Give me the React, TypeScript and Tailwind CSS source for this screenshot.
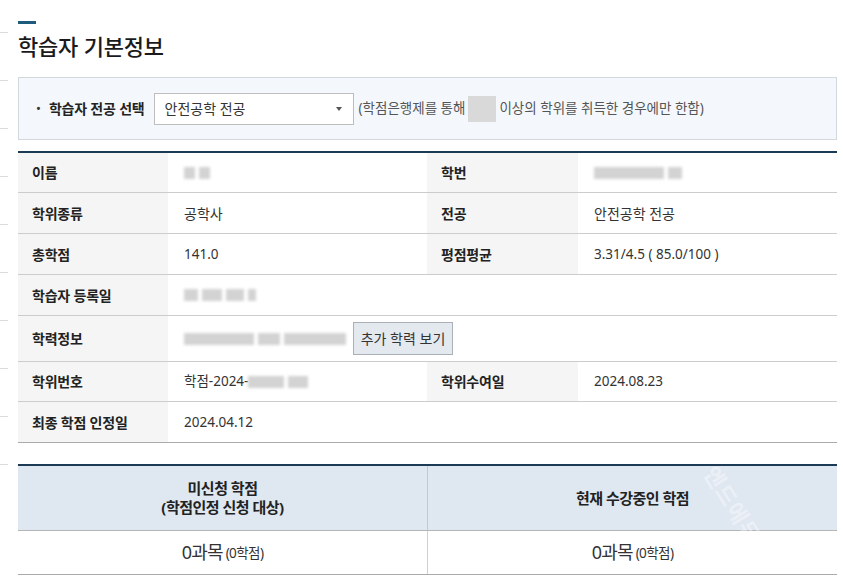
import React from "react";

const FONT = { fontFamily: '"Noto Sans", "Noto Sans CJK KR", sans-serif' };

function Blur({ parts }: { parts: number[] }) {
  return (
    <span className="inline-flex items-center gap-[4px] align-middle">
      {parts.map((s, i) => (
        <span key={i} className="inline-block h-[12px] bg-[#d3d3d3] blur-[1.5px]" style={{ width: s }} />
      ))}
    </span>
  );
}

function Label({ children }: { children: React.ReactNode }) {
  return (
    <div className="flex items-center bg-[#f5f5f5] pl-[14px] text-[14px] font-bold tracking-[-0.2px] text-[#222]">
      {children}
    </div>
  );
}

function Value({ children, span, ko }: { children?: React.ReactNode; span?: boolean; ko?: boolean }) {
  return (
    <div
      className={
        "flex items-center pl-[16px] text-[#333] " +
        (ko ? "text-[14px] " : "text-[13.5px] ") +
        (span ? "col-span-3" : "")
      }
    >
      {children}
    </div>
  );
}

function Watermark({ x, y }: { x: number; y: number }) {
  return (
    <div
      className="pointer-events-none absolute rotate-[58deg] select-none text-[22px] font-bold tracking-[1px] text-white/40"
      style={{ left: x, top: y }}
    >
      엔드에듀
    </div>
  );
}

export default function App() {
  const sideLines = [32, 80, 127, 177, 224, 272, 320, 368, 417, 472];
  return (
    <div className="relative h-[587px] w-[843px] overflow-hidden bg-white" style={FONT}>
      <div className="flex">
        {/* sidebar remnants */}
        <div className="flex w-[8px] flex-col pt-[32px]">
          {sideLines.map((_, i) => (
            <div key={i} className="h-[48px] border-t border-[#dcdcdc]" />
          ))}
        </div>

        <div className="ml-[10px] w-[819px]">
          <div className="pt-[21px]">
            <div className="h-[3px] w-[18px] bg-[#1e5c7e]" />
          </div>
          <h2 className="mt-[7px] h-[30px] text-[22px] font-medium leading-[30px] tracking-[-0.2px] text-[#1a1a1a]">
            학습자 기본정보
          </h2>

          {/* major select */}
          <div className="mt-[16px] flex h-[63px] items-center border border-[#d3d8de] bg-[#f4f8fc] pl-[17px]">
            <span className="mr-[8px] text-[13px] text-[#333]">•</span>
            <span className="text-[14px] font-bold tracking-[-0.2px] text-[#222]">학습자 전공 선택</span>
            <div className="ml-[9px] flex h-[32px] w-[200px] items-center justify-between border border-[#bdbdbd] bg-white pl-[10px] pr-[11px] text-[14px] text-[#333]">
              <span>안전공학 전공</span>
              <span className="h-0 w-0 border-x-[3.5px] border-t-[4px] border-x-transparent border-t-[#555]" />
            </div>
            <span className="ml-[5px] flex items-center text-[13.5px] text-[#555]">
              (학점은행제를 통해
              <span className="ml-[3px] mr-[3px] inline-block h-[26px] w-[28px] bg-[#d9d9d9]" />
              이상의 학위를 취득한 경우에만 한함)
            </span>
          </div>

          {/* info table */}
          <div className="mt-[11px] border-t-2 border-[#1d3a55]">
            <div className="grid h-[40px] grid-cols-[150px_259px_151px_259px] border-b border-[#cccccc]">
              <Label>이름</Label>
              <Value>
                <Blur parts={[11, 11]} />
              </Value>
              <Label>학번</Label>
              <Value>
                <Blur parts={[70, 14]} />
              </Value>
            </div>
            <div className="grid h-[41px] grid-cols-[150px_259px_151px_259px] border-b border-[#cccccc]">
              <Label>학위종류</Label>
              <Value ko>공학사</Value>
              <Label>전공</Label>
              <Value ko>안전공학 전공</Value>
            </div>
            <div className="grid h-[41px] grid-cols-[150px_259px_151px_259px] border-b border-[#cccccc]">
              <Label>총학점</Label>
              <Value>141.0</Value>
              <Label>평점평균</Label>
              <Value>3.31/4.5 ( 85.0/100 )</Value>
            </div>
            <div className="grid h-[41px] grid-cols-[150px_259px_151px_259px] border-b border-[#cccccc]">
              <Label>학습자 등록일</Label>
              <Value span>
                <Blur parts={[14, 20, 18, 8]} />
              </Value>
            </div>
            <div className="grid h-[46px] grid-cols-[150px_259px_151px_259px] border-b border-[#cccccc]">
              <Label>학력정보</Label>
              <Value span>
                <Blur parts={[70, 22, 62]} />
                <button className="ml-[7px] h-[33px] w-[100px] border border-[#a9b0b8] bg-[#e4e9f0] text-[14px] text-[#333]">
                  추가 학력 보기
                </button>
              </Value>
            </div>
            <div className="grid h-[40px] grid-cols-[150px_259px_151px_259px] border-b border-[#cccccc]">
              <Label>학위번호</Label>
              <div className="flex items-center pl-[16px] text-[13.5px] text-[#333]">
                학점-2024-
                <Blur parts={[36, 20]} />
              </div>
              <Label>학위수여일</Label>
              <Value>2024.08.23</Value>
            </div>
            <div className="grid h-[41px] grid-cols-[150px_259px_151px_259px] border-b border-[#aaaaaa]">
              <Label>최종 학점 인정일</Label>
              <Value span>2024.04.12</Value>
            </div>
          </div>

          {/* credits table */}
          <div className="mt-[21px] border-t-2 border-[#1d3a55]">
            <div className="grid h-[65px] grid-cols-[410px_409px] border-b border-[#b5b5b5] bg-[#dfe7f1]">
              <div className="flex flex-col items-center justify-center border-r border-[#c4c9cf] text-[15px] font-bold leading-[19px] tracking-[-0.5px] text-[#222]">
                <span>미신청 학점</span>
                <span>(학점인정 신청 대상)</span>
              </div>
              <div className="flex items-center justify-center text-[15px] font-bold tracking-[-0.5px] text-[#222]">
                현재 수강중인 학점
              </div>
            </div>
            <div className="grid h-[44px] grid-cols-[410px_409px] border-b border-[#aaaaaa]">
              <div className="flex items-center justify-center border-r border-[#d0d0d0] text-[#333]">
                <span className="text-[18px] tracking-[-0.8px]">0과목</span>
                <span className="ml-[3px] pt-[2px] text-[13.5px] tracking-[-0.6px]">(0학점)</span>
              </div>
              <div className="flex items-center justify-center text-[#333]">
                <span className="text-[18px] tracking-[-0.8px]">0과목</span>
                <span className="ml-[3px] pt-[2px] text-[13.5px] tracking-[-0.6px]">(0학점)</span>
              </div>
            </div>
          </div>
        </div>
      </div>

      <Watermark x={690} y={488} />
    </div>
  );
}
